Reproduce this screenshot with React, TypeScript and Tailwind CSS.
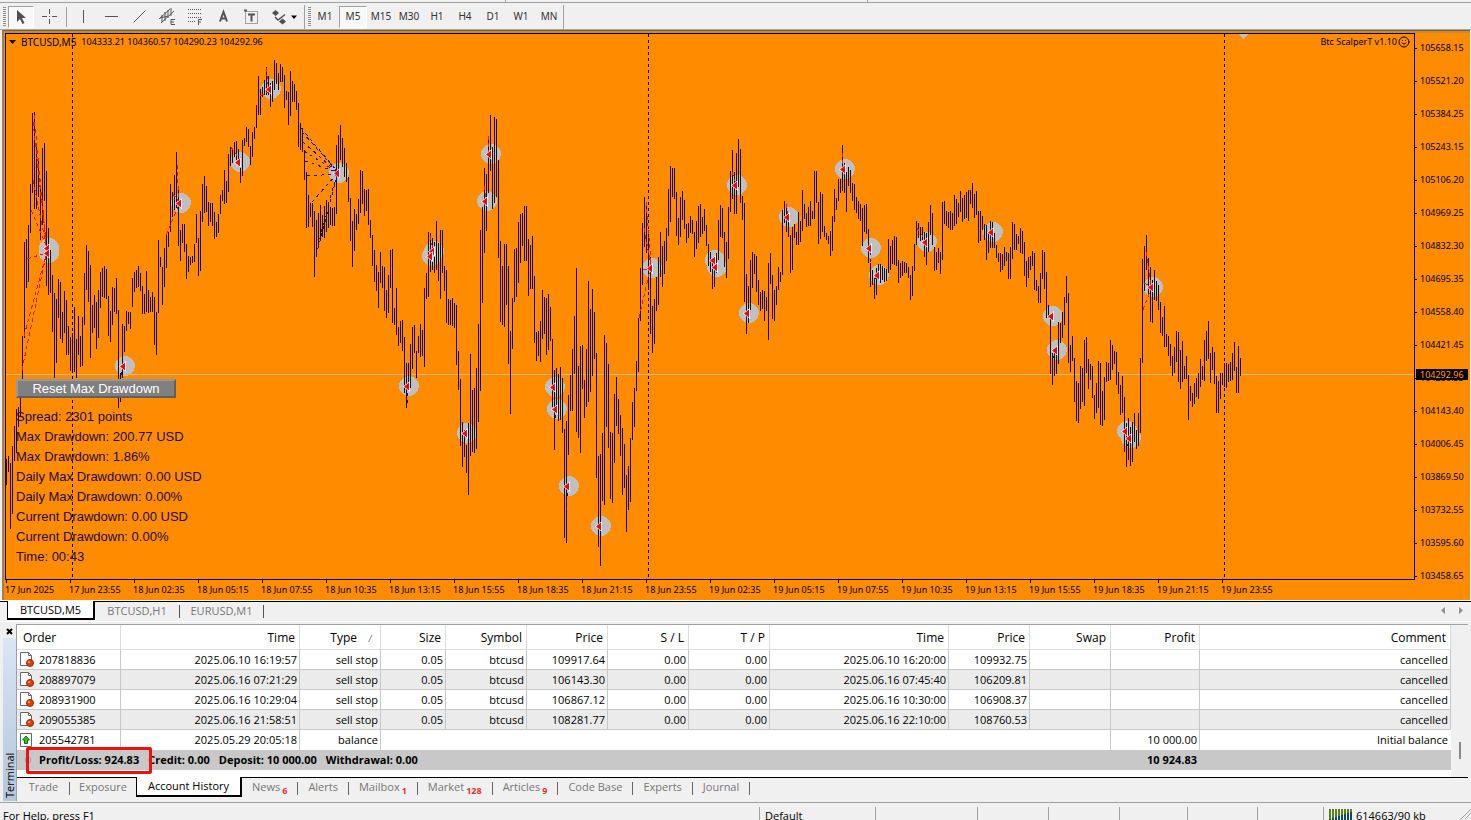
import { Smile } from "lucide-react";
import type { ReactNode } from "react";

/* One bar every 2px from FIRST_X; each entry is "high-low" in chart pixels. */
const FIRST_X = 6;
const BARS = `459-485 456-472 463-529 446-514 426-461 409-453 407-427 390-417 336-395
242-338 239-288 225-282 184-233 113-193 112-209 143-209 160-197 185-240 148-225 143-201 171-286 228-295 250-293 275-332 293-378
299-363 279-318 282-339 312-343 291-333 300-355 326-355 337-371 333-371 307-372 339-378 316-355 336-367 317-366 273-325 245-290
251-302 265-358 305-333 295-328 302-349 290-338 272-308 268-297 266-298 269-299 296-336 311-342 287-325 288-312 278-314 310-408
373-402 324-378 326-352 311-331 312-324 312-329 278-307 272-292 270-288 266-287 273-291 286-314 294-314 271-312 290-313 297-312
292-312 297-345 312-355 240-313 257-267 267-305 248-287 233-268 232-247 184-232 192-217 175-210 152-208 186-246 230-261 224-243
224-252 244-279 256-272 257-265 256-263 244-262 214-243 238-276 211-271 184-222 176-213 186-212 202-226 203-222 203-226 212-239
222-237 214-233 195-214 190-201 170-204 181-203 154-192 147-166 148-163 142-157 141-160 149-166 157-183 140-176 138-146 127-142
129-147 146-165 132-157 127-139 105-128 76-115 89-115 87-97 80-95 67-95 76-95 83-107 81-102 60-90 63-84
73-90 64-82 67-82 75-108 91-100 92-125 71-116 81-102 84-102 91-110 103-147 123-150 128-152 150-180 172-228
195-227 203-217 203-227 211-277 220-257 213-246 205-240 215-237 206-238 200-232 202-228 207-225 208-226 207-226 145-214
135-175 125-160 138-167 148-177 163-182 177-202 198-241 221-267 209-251 214-230 199-224 170-213 171-204 189-216 190-211
189-225 220-238 235-266 250-282 265-291 272-308 252-283 266-288 267-311 290-318 275-313 250-288 249-323 308-325 288-335
327-346 321-343 320-351 337-393 363-408 363-388 344-388 327-369 325-353 351-378 336-353 324-357 330-356 288-367 273-299
232-297 233-272 238-270 242-273 221-270 243-281 230-299 230-273 266-291 270-323 299-325 300-325 298-326 303-328 305-365
351-390 379-446 422-467 430-457 445-473 423-495 354-456 390-452 388-453 368-449 324-422 230-391 207-303 168-253 174-231
136-193 115-171 147-209 117-203 119-197 160-258 241-322 266-325 244-327 244-305 266-364 331-414 298-349 249-302 248-297
222-283 214-263 213-246 206-261 206-261 239-296 245-289 236-289 276-343 332-361 331-356 321-362 290-339 297-334 298-355
294-350 307-341 339-407 370-450 368-413 374-421 367-420 378-433 429-538 421-543 395-455 375-411 349-411 316-374 268-432
366-438 346-453 345-389 380-418 349-407 281-402 309-392 289-376 312-359 353-478 456-547 454-566 433-501 335-505 343-427
364-448 432-499 433-503 394-463 377-426 399-434 415-456 428-495 444-488 475-532 466-510 438-502 402-440 388-427 361-391
318-372 268-321 223-285 197-247 202-253 235-290 257-334 306-353 299-344 277-311 257-305 232-277 246-287 241-274 228-261
189-236 166-222 168-197 168-199 192-236 218-245 197-237 191-220 200-229 224-243 223-238 216-233 220-234 232-257 221-249
206-243 204-237 217-234 209-231 225-246 244-266 252-272 258-289 263-287 253-273 220-260 205-237 208-238 232-267 242-278
207-259 171-212 150-199 172-214 153-214 139-187 149-203 196-220 203-302 274-334 286-323 260-310 252-288 254-274 256-292
280-305 292-311 290-309 291-321 297-311 263-340 253-284 275-319 290-321 286-305 267-290 272-282 210-275 201-223 204-232
220-237 235-273 227-270 224-238 232-245 212-245 221-242 190-231 204-219 213-227 207-226 201-226 211-219 171-219 171-203
202-244 192-239 194-232 226-237 233-240 236-244 231-256 216-251 189-222 198-210 179-201 179-193 145-191 163-193 172-212
167-186 170-193 183-201 184-210 197-213 201-219 204-221 208-246 205-232 204-234 229-263 263-287 270-285 278-299 268-295
264-280 264-283 266-280 268-282 269-281 239-273 246-270 240-264 236-265 237-266 260-283 263-278 261-276 262-273 263-273
267-278 275-300 266-296 244-271 221-245 223-238 227-241 227-240 232-257 233-265 222-252 205-235 213-245 247-271 252-270
248-263 252-274 202-260 201-224 211-226 212-228 211-230 213-230 195-226 199-224 203-217 191-212 198-222 195-219 192-218
190-221 190-204 183-208 194-218 191-215 211-243 211-241 216-230 224-240 225-260 233-253 221-248 222-248 233-248 245-258
253-262 253-272 254-270 247-266 252-261 253-279 247-279 222-259 224-250 234-250 236-244 228-253 231-254 242-276 261-287
257-278 256-270 251-266 253-290 280-291 286-303 273-303 250-279 252-289 272-318 305-318 318-374 353-385 352-376 350-374
322-364 323-343 312-338 297-325 276-303 293-363 345-372 336-361 358-402 381-421 383-423 366-409 368-402 340-406 337-373
359-389 364-380 366-398 395-419 383-413 361-408 363-425 391-426 377-420 362-382 363-381 340-380 345-370 351-364 352-385
372-394 385-415 376-413 397-452 423-467 418-460 427-466 422-462 413-442 430-449 413-446 358-433 259-363 246-291 235-270
258-295 267-322 280-323 270-300 281-301 285-310 302-333 317-336 306-347 334-347 336-356 344-366 356-376 347-373 331-362
332-382 350-389 341-382 366-379 356-379 375-420 386-401 393-407 383-404 378-397 373-399 359-387 366-380 340-381 331-361
321-359 353-383 347-370 352-384 376-413 381-413 373-399 373-385 363-387 363-388 364-382 362-381 353-380 342-371 367-393
346-393 358-376`
  .split(/\s+/)
  .map((bar) => bar.split("-").map(Number));

const SIGNALS = [
  [49, 248], [49, 253], [125, 366], [181, 203], [240, 162], [271, 89], [339, 173], [409, 386],
  [434, 251], [432, 256], [467, 433], [491, 154], [487, 201], [555, 387], [557, 409], [569, 486],
  [601, 526], [652, 268], [715, 260], [717, 267], [737, 185], [749, 313], [789, 217], [845, 169],
  [871, 248], [879, 275], [927, 242], [993, 232], [1053, 316], [1057, 350], [1127, 431],
  [1131, 438], [1153, 287],
];

const RED_LINKS = [
  [34, 115, 46, 243], [33, 122, 46, 243], [43, 210, 46, 243], [31, 210, 46, 245], [33, 180, 45, 240], [27, 259, 46, 253], [24, 336, 46, 255],
  [22, 370, 46, 255], [177, 165, 179, 200], [173, 194, 179, 202], [166, 235, 179, 205], [231, 147, 240, 160], [266, 68, 268, 84],
  [260, 96, 268, 92], [430, 236, 433, 250], [484, 186, 486, 199], [488, 136, 489, 152], [644, 228, 651, 266],
  [646, 202, 651, 262], [639, 318, 650, 270], [643, 270, 650, 268], [732, 172, 736, 184], [783, 218, 788, 216], [786, 204, 788, 214],
  [842, 153, 843, 168], [917, 228, 926, 241], [1146, 252, 1151, 285], [1143, 310, 1151, 289], [1144, 283, 1151, 287],
];

const BLUE_LINKS = [
  [302, 132, 337, 171], [301, 128, 337, 171], [303, 142, 337, 172], [304, 151, 337, 172], [305, 161, 337, 172],
  [307, 176, 337, 174], [312, 202, 337, 174], [330, 198, 337, 176], [318, 246, 328, 205], [316, 256, 337, 176],
  [119, 382, 123, 367], [407, 403, 408, 388], [464, 438, 466, 433], [552, 398, 555, 388], [555, 418, 557, 410],
  [566, 510, 568, 488], [714, 278, 715, 268], [746, 320, 748, 314], [870, 262, 870, 248], [874, 280, 878, 275],
  [988, 246, 992, 233], [1048, 316, 1052, 316], [1053, 358, 1056, 351], [1127, 446, 1130, 439],
];

const PRICES = [
  "105658.15", "105521.20", "105384.25", "105243.15", "105106.20", "104969.25", "104832.30", "104695.35",
  "104558.40", "104421.45", "104280.35", "104143.40", "104006.45", "103869.50", "103732.55", "103595.60", "103458.65",
];

const TIMES = [
  "17 Jun 2025", "17 Jun 23:55", "18 Jun 02:35", "18 Jun 05:15", "18 Jun 07:55", "18 Jun 10:35", "18 Jun 13:15",
  "18 Jun 15:55", "18 Jun 18:35", "18 Jun 21:15", "18 Jun 23:55", "19 Jun 02:35", "19 Jun 05:15", "19 Jun 07:55",
  "19 Jun 10:35", "19 Jun 13:15", "19 Jun 15:55", "19 Jun 18:35", "19 Jun 21:15", "19 Jun 23:55",
];

const STATS = [
  "Spread: 2301 points",
  "Max Drawdown: 200.77 USD",
  "Max Drawdown: 1.86%",
  "Daily Max Drawdown: 0.00 USD",
  "Daily Max Drawdown: 0.00%",
  "Current Drawdown: 0.00 USD",
  "Current Drawdown: 0.00%",
  "Time: 00:43",
];

const COLUMNS = ["Order", "Time", "Type", "Size", "Symbol", "Price", "S / L", "T / P", "Time", "Price", "Swap", "Profit", "Comment"];

const ORDERS = [
  ["207818836", "2025.06.10 16:19:57", "109917.64", "2025.06.10 16:20:00", "109932.75"],
  ["208897079", "2025.06.16 07:21:29", "106143.30", "2025.06.16 07:45:40", "106209.81"],
  ["208931900", "2025.06.16 10:29:04", "106867.12", "2025.06.16 10:30:00", "106908.37"],
  ["209055385", "2025.06.16 21:58:51", "108281.77", "2025.06.16 22:10:00", "108760.53"],
];

const DRAW_TOOLS: { name: string; icon: ReactNode }[] = [
  { name: "Vertical line", icon: <path d="M10.5 4v13" /> },
  { name: "Horizontal line", icon: <path d="M4 10.5h13" /> },
  { name: "Trendline", icon: <path d="M4.5 16.5l12-12" /> },
  {
    name: "Equidistant channel",
    icon: (
      <>
        <path d="M2 13L13 3M4 17L17 5M5 9v7M8 6v9M11 4v8M14 2v8M3 12l8-2" />
        <path d="M18 13.5h-4v5h4M14 16h3" />
      </>
    ),
  },
  {
    name: "Fibonacci retracement",
    icon: (
      <>
        <path d="M3 3.5h14M3 7.5h14M3 11.5h14M3 15.5h8" strokeDasharray="1 1" />
        <path d="M17 13.5h-3.5v5.500M13 16h3" />
      </>
    ),
  },
  { name: "Text", icon: <path d="M7 15.5L10.5 6l3.500 9.500M8.500 12.500h4.500" strokeWidth="2" /> },
  {
    name: "Text label",
    icon: (
      <>
        <path d="M4.500 5.500h12v12h-12z" strokeDasharray="1 1" />
        <path d="M7 8.500h7M10.500 8.500v7" strokeWidth="2" />
        <path d="M3 4.500h3" strokeWidth="2" />
      </>
    ),
  },
];

const TIMEFRAMES = ["M1", "M5", "M15", "M30", "H1", "H4", "D1", "W1", "MN"];

const TERMINAL_TABS: [string, string?][] = [
  ["News", "6"], ["Alerts"], ["Mailbox", "1"], ["Market", "128"], ["Articles", "9"], ["Code Base"], ["Experts"], ["Journal"],
];

function ToolIcon({ children }: { children: ReactNode }) {
  return (
    <svg className="size-[21px] fill-none stroke-[#555]" viewBox="0 0 21 21" aria-hidden="true">
      {children}
    </svg>
  );
}

function Grip() {
  return (
    <svg className="h-[20px] w-[3px] shrink-0" aria-hidden="true">
      <path d="M1.5 0v20" stroke="#8c8c8c" strokeWidth="3" strokeDasharray="1 1" />
    </svg>
  );
}

function Toolbar() {
  return (
    <header className="shrink-0 border-b border-[#a8a8a8] bg-[#f0f0f0]">
      <div className="flex h-[3px] border-b border-[#a0a0a0]">
        <div className="w-[506px] border-r border-[#a0a0a0]" />
        <div className="w-[362px] border-r border-[#a0a0a0]" />
      </div>
      <div className="flex h-[26px] items-center pt-px pl-[3px]">
        <Grip />
        <button aria-label="Cursor" className="ml-[2px] flex h-[22px] w-[26px] items-center justify-center border border-t-[#a0a0a0] border-l-[#a0a0a0] border-r-white border-b-white bg-[#f8f8f8]">
          <svg className="h-[16px] w-[12px]" viewBox="0 0 12 16" aria-hidden="true">
            <path d="M2 1v12l3-3 2.500 5 2-1-2.500-5h4z" fill="#505050" />
          </svg>
        </button>
        <button aria-label="Crosshair" className="ml-[5px]">
          <ToolIcon>
            <path d="M10.5 3v5m0 5v5M3 10.5h5m5 0h5M10 10.5h1" />
          </ToolIcon>
        </button>
        <div className="ml-[6px] h-[20px] w-px bg-[#a0a0a0]" />
        <div className="ml-[6px] flex gap-[7px]">
          {DRAW_TOOLS.map((t) => (
            <button key={t.name} aria-label={t.name}>
              <ToolIcon>{t.icon}</ToolIcon>
            </button>
          ))}
        </div>
        <button aria-label="Arrows" className="ml-[9px]">
          <svg className="h-[18px] w-[28px]" viewBox="0 0 28 18" aria-hidden="true">
            <path d="M1 5l3.500-3L8 5 4.500 8zM8 13.500l3.500-3 3.500 3-3.500 3z" fill="#505050" />
            <path d="M4 9l3 3 7-5.500" fill="none" stroke="#505050" strokeWidth="1.5" />
            <path d="M20 7.500h6l-3 3.500z" fill="#000" />
          </svg>
        </button>
        <div className="ml-[5px] mr-[3px] h-[24px] w-px bg-[#a0a0a0]" />
        <Grip />
        <div className="flex h-[24px] items-center border-r border-[#a0a0a0]">
          {TIMEFRAMES.map((f) => (
            <button
              key={f}
              className={
                f === "M5"
                  ? "h-[22px] w-[28px] border border-t-[#a0a0a0] border-l-[#a0a0a0] border-r-white border-b-white bg-[#f8f8f8] font-[Noto_Sans,sans-serif] text-[10px] text-[#333]"
                  : "h-[22px] w-[28px] font-[Noto_Sans,sans-serif] text-[10px] text-[#333]"
              }
            >
              {f}
            </button>
          ))}
        </div>
      </div>
    </header>
  );
}

function Plot() {
  return (
    <svg className="absolute inset-0 h-full w-full" shapeRendering="crispEdges" aria-label="BTCUSD M5 bar chart">
      <g transform="translate(-6 -34)">
        {SIGNALS.map(([x, y]) => (
          <circle key={`${x}-${y}`} cx={x} cy={y} r="10" fill="#c0c0c0" />
        ))}
        {[72, 648, 1224].map((x) => (
          <path key={x} d={`M${x}.5 34V577`} stroke="#000" strokeDasharray="3 3" />
        ))}
        <path d="M6 374.5H3000" stroke="#d9b98c" />
        <path d={BARS.map(([hi, lo], i) => `M${FIRST_X + i * 2}.5 ${hi}V${lo}`).join("")} stroke="#1c0c10" />
        <path d={RED_LINKS.map(([a, b, c, d]) => `M${a} ${b}L${c} ${d}`).join("")} stroke="#f01400" strokeDasharray="4 3" />
        <path d={BLUE_LINKS.map(([a, b, c, d]) => `M${a} ${b}L${c} ${d}`).join("")} stroke="#1a1090" strokeDasharray="3 4" />
        {SIGNALS.map(([x, y]) => (
          <g key={`${x}-${y}`} shapeRendering="geometricPrecision">
            <path d={`M${x - 6} ${y + 0.5}L${x + 1} ${y - 5}V${y + 6}Z`} fill="#fff" />
            <path d={`M${x - 5} ${y + 0.5}L${x} ${y - 3.5}V${y + 4.5}Z`} fill="#f00010" />
          </g>
        ))}
        <path d="M1239 34h9l-4.500 5z" fill="#c0c0c0" />
      </g>
    </svg>
  );
}

function Chart() {
  return (
    <main className="ml-[2px] mr-px flex min-h-0 flex-1 flex-col border-t border-l-2 border-[#806030] border-l-[#a08050] bg-[#ff8c00] font-[Noto_Sans,sans-serif] text-[9px] leading-[12px] text-black">
      <div className="h-[2px] shrink-0 bg-[#c88a32]" />
      <div className="flex min-h-0 flex-1">
        <section className="relative ml-px flex-1 overflow-hidden border border-black">
          <Plot />
          <div className="relative flex items-center justify-between pt-[2px] pl-[3px] pr-[4px]">
            <div className="flex items-center gap-[5px]">
              <svg className="h-[4px] w-[7px]" viewBox="0 0 7 4" aria-hidden="true">
                <path d="M0 0h7L3.500 4z" />
              </svg>
              <h1 className="text-[10px]">BTCUSD,M5</h1>
              <span>104333.21 104360.57 104290.23 104292.96</span>
            </div>
            <div className="flex items-center gap-px">
              Btc ScalperT v1.10
              <Smile size={12} strokeWidth={2} />
            </div>
          </div>
          <div className="absolute left-[10px] top-[345px] font-[Liberation_Sans,sans-serif] text-[13px] leading-[20px] text-[#280a40]">
            <button className="block h-[19px] w-[160px] border-2 border-t-[#989898] border-l-[#989898] border-r-[#606060] border-b-[#606060] bg-[#808080] text-[13px] leading-[15px] text-white">
              Reset Max Drawdown
            </button>
            <div className="pt-[9px]">
              {STATS.map((s) => (
                <p key={s}>{s}</p>
              ))}
            </div>
          </div>
        </section>
        <aside className="w-[55px] shrink-0">
          <div className="relative flex flex-col pt-[9px]">
            {PRICES.map((p) => (
              <div key={p} className="flex h-[33px] items-start gap-[3px]">
                <span className="mt-[6px] h-px w-[2px] bg-black" />
                {p}
              </div>
            ))}
            <div className="absolute left-px top-[336px] w-[52px] bg-black pl-[4px] leading-[11px] text-[#ff9c20]">104292.96</div>
          </div>
        </aside>
      </div>
      <div className="flex h-[20px] shrink-0 overflow-hidden">
        {TIMES.map((t) => (
          <div key={t} className="w-[64px] shrink-0 whitespace-nowrap">
            <div className="ml-[2px] h-[3px] w-px bg-black" />
            <div className="ml-px leading-[13px]">{t}</div>
          </div>
        ))}
      </div>
    </main>
  );
}

function ChartTabs() {
  return (
    <nav aria-label="Charts" className="flex h-[24px] shrink-0 flex-col border-t border-white bg-[#f0f0f0] font-[Open_Sans,sans-serif] text-[#777]">
      <div className="flex h-[20px] items-start border-t border-black pl-[7px] leading-[17px]">
        <button className="-mt-px h-[19px] w-[88px] border-r-2 border-b-2 border-l border-black bg-white text-[11px] text-black">BTCUSD,M5</button>
        <button className="w-[84px] text-[11px]">BTCUSD,H1</button>
        <span className="mt-[3px] h-[13px] w-px bg-[#555]" />
        <button className="w-[83px] text-[11px]">EURUSD,M1</button>
        <span className="mt-[3px] h-[13px] w-px bg-[#555]" />
        <svg className="mt-[5px] ml-auto mr-[8px] h-[7px] w-[22px]" viewBox="0 0 22 7" aria-hidden="true">
          <path d="M4 0v7L0 3.500zM18 0v7l4-3.500z" fill="#909090" />
        </svg>
      </div>
      <div className="h-px bg-white" />
    </nav>
  );
}

function CancelledIcon() {
  return (
    <svg className="h-[15px] w-[14px]" viewBox="0 0 14 15" aria-hidden="true">
      <path d="M.5.5h8l3 3v10H.5z" fill="#fff" stroke="#666" />
      <path d="M8.500.5v3h3" fill="none" stroke="#666" />
      <circle cx="10" cy="11" r="3.500" fill="#e04010" stroke="#a02808" />
      <circle cx="9" cy="10" r="1" fill="#ffa070" />
    </svg>
  );
}

function DepositIcon() {
  return (
    <svg className="h-[14px] w-[12px]" viewBox="0 0 12 14" aria-hidden="true">
      <path d="M.5.5h11v13H.5z" fill="#fff" stroke="#666" />
      <path d="M6 3l3.500 4H7.500v3.500h-3V7h-2z" fill="#30c030" stroke="#087808" />
    </svg>
  );
}

const CELL = "border-r border-b border-[#c8c8c8] pr-[2px]";

function History() {
  return (
    <table className="w-full table-fixed border-separate border-spacing-0 bg-white text-right text-[11px] leading-[18px] text-black">
      <colgroup>
        <col className="w-[104px]" />
        <col className="w-[179px]" />
        <col className="w-[81px]" />
        <col className="w-[65px]" />
        <col className="w-[81px]" />
        <col className="w-[81px]" />
        <col className="w-[81px]" />
        <col className="w-[81px]" />
        <col className="w-[179px]" />
        <col className="w-[81px]" />
        <col className="w-[81px]" />
        <col className="w-[89px]" />
        <col />
      </colgroup>
      <thead>
        <tr className="h-[25px] text-[12px]">
          {COLUMNS.map((c, i) => (
            <th
              key={i}
              className={
                i === 0
                  ? "border-r border-b border-[#dcdcdc] p-0 pt-[2px] pl-[6px] text-left font-normal"
                  : "border-r border-b border-[#dcdcdc] p-0 pt-[2px] pr-[4px] font-normal"
              }
            >
              {c}
              {c === "Type" && (
                <svg className="mr-[3px] ml-[11px] inline h-[7px] w-[5px]" viewBox="0 0 5 7" aria-hidden="true">
                  <path d="M.5 7l3.500-7" stroke="#888" />
                </svg>
              )}
            </th>
          ))}
        </tr>
      </thead>
      <tbody>
        {ORDERS.map(([id, open, price, close, closePrice], i) => (
          <tr key={id} className={i % 2 ? "h-[20px] bg-[#ebebeb]" : "h-[20px]"}>
            <td className="border-r border-b border-[#c8c8c8]">
              <div className="flex items-center gap-[5px] pl-[3px]">
                <CancelledIcon />
                {id}
              </div>
            </td>
            {[open, "sell stop", "0.05", "btcusd", price, "0.00", "0.00", close, closePrice, "", "", "cancelled"].map((v, j) => (
              <td key={j} className={CELL}>
                {v}
              </td>
            ))}
          </tr>
        ))}
        <tr className="h-[20px]">
          <td className="border-r border-[#c8c8c8]">
            <div className="flex items-center gap-[7px] pl-[3px]">
              <DepositIcon />
              205542781
            </div>
          </td>
          <td className="border-r border-[#c8c8c8] pr-[2px]">2025.05.29 20:05:18</td>
          <td className="border-r border-[#c8c8c8] pr-[2px]">balance</td>
          <td colSpan={8} className="border-r border-[#c8c8c8]" />
          <td className="border-r border-[#c8c8c8] pr-[2px]">10 000.00</td>
          <td className="pr-[3px]">Initial balance</td>
        </tr>
        <tr className="h-[20px] bg-[#c8c8c8] font-bold">
          <td colSpan={11} className="text-left">
            <div className="relative flex gap-[9px] whitespace-pre pl-[22px]">
              <svg className="absolute top-[5px] left-[7px] size-[8px]" viewBox="0 0 8 8" aria-hidden="true">
                <circle cx="4" cy="4" r="3" fill="none" stroke="#b0a0a0" />
              </svg>
              <span>Profit/Loss: 924.83</span>
              <span>Credit: 0.00</span>
              <span>Deposit: 10 000.00</span>
              <span>Withdrawal: 0.00</span>
              <span className="absolute -top-[4px] left-[9px] h-[27px] w-[126px] rounded-xs border-[3px] border-[#ee1111]" />
            </div>
          </td>
          <td className="pr-[3px]">10 924.83</td>
          <td />
        </tr>
      </tbody>
    </table>
  );
}

function TerminalTabs() {
  return (
    <nav aria-label="Terminal" className="flex h-[24px] items-start border-t border-black bg-[#f0f0f0] text-[11px] leading-[18px] text-[#777]">
      <button className="w-[52px] pl-px">Trade</button>
      <span className="mt-[4px] h-[13px] w-px bg-[#666]" />
      <button className="w-[66px]">Exposure</button>
      <button className="-mt-px h-[20px] w-[106px] border-r-2 border-b-2 border-l border-black bg-white text-black">Account History</button>
      {TERMINAL_TABS.map(([name, count]) => (
        <span key={name} className="flex">
          <button className="flex px-[10px]">
            {name}
            {count && <span className="ml-[2px] pt-[4px] text-[9px] font-bold text-[#e03030]">{count}</span>}
          </button>
          <span className="mt-[4px] h-[13px] w-px bg-[#666]" />
        </span>
      ))}
    </nav>
  );
}

function Terminal() {
  return (
    <section className="flex shrink-0 bg-[#f0f0f0] pr-[3px] pb-px pl-[2px] font-[Open_Sans,sans-serif]">
      <div className="flex w-[14px] flex-col items-center">
        <button aria-label="Close terminal" className="flex h-[14px] items-center">
          <svg className="size-[7px]" viewBox="0 0 7 7" aria-hidden="true">
            <path d="M1 1l5 5M6 1L1 6" stroke="#000" strokeWidth="2" />
          </svg>
        </button>
        <div className="flex w-[13px] flex-1 rotate-180 items-center bg-linear-to-b from-[#b4c6da] to-[#d8e6f5] pt-[3px] text-[11px] leading-[13px] text-black [writing-mode:vertical-rl]">
          Terminal
        </div>
      </div>
      <div className="flex-1 border-t border-l border-[#a0a0a0]">
        <div className="flex bg-[#f0f0f0]">
          <div className="flex-1 bg-white pb-[7px]">
            <History />
          </div>
          <div className="flex w-[17px] justify-center">
            <div className="mt-[117px] h-[17px] w-[2px] bg-[#888]" />
          </div>
        </div>
        <TerminalTabs />
      </div>
    </section>
  );
}

function StatusBar() {
  return (
    <footer className="flex h-[18px] shrink-0 overflow-hidden border-t border-[#a0a0a0] bg-[#f0f0f0] pt-[4px] font-[Open_Sans,sans-serif] text-[11px] leading-[18px] text-black">
      <div className="flex-1 pl-[3px]">For Help, press F1</div>
      <div className="w-[116px] border-l border-[#a0a0a0] pl-[5px]">Default</div>
      <div className="w-[102px] border-l border-[#a0a0a0]" />
      <div className="w-[71px] border-l border-[#a0a0a0]" />
      <div className="w-[71px] border-l border-[#a0a0a0]" />
      <div className="w-[68px] border-l border-[#a0a0a0]" />
      <div className="w-[70px] border-l border-[#a0a0a0]" />
      <div className="w-[66px] border-l border-[#a0a0a0]" />
      <div className="flex w-[148px] gap-[4px] border-l border-[#a0a0a0] pl-[5px]">
        <svg className="mt-[2px] h-[12px] w-[23px]" shapeRendering="crispEdges" aria-hidden="true">
          {[0, 3, 6, 9, 12, 15, 18, 21].map((x, i) => (
            <g key={x}>
              <rect x={x} y="0" width="2" height="12" fill="#5a8018" />
              <rect x={x} y={10 - i} width="2" height="12" fill="#104868" />
            </g>
          ))}
        </svg>
        614663/90 kb
        <svg className="ml-auto h-[12px] w-[10px]" viewBox="0 0 10 12" aria-hidden="true">
          <path d="M0 12L10 2M4 12l6-6" stroke="#a0a0a0" />
        </svg>
      </div>
    </footer>
  );
}

export default function App() {
  return (
    <div className="flex h-screen w-full flex-col overflow-hidden bg-[#f0f0f0]">
      <Toolbar />
      <Chart />
      <ChartTabs />
      <Terminal />
      <StatusBar />
    </div>
  );
}
